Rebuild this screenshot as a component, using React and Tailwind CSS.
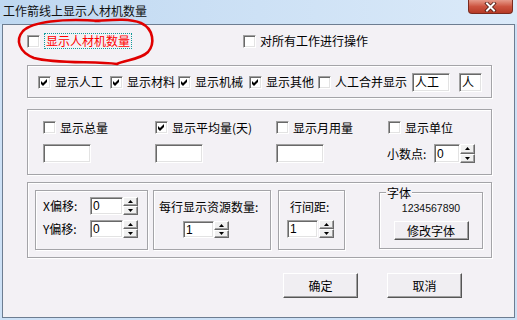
import React from "react";

const Check = ({ checked }) => (
  <span className="relative block w-[13px] h-[13px] shrink-0 bg-white border border-t-[#a0a0a0] border-l-[#a0a0a0] border-b-white border-r-white shadow-[inset_1px_1px_0_#696969,inset_-1px_-1px_0_#e3e3e3]">
    {checked && (
      <svg className="absolute left-0 top-0" width="11" height="11" viewBox="0 0 11 11">
        <path d="M2 4 L4 6 L8 2 L8 5 L4 9 L2 7 Z" fill="#000" />
      </svg>
    )}
  </span>
);

const CB = ({ checked, children, className = "" }) => (
  <div className={"flex items-center gap-[4px] " + className}>
    <Check checked={checked} />
    <span className="text-[12px] leading-[14px] whitespace-nowrap">{children}</span>
  </div>
);

const Field = ({ children, className = "" }) => (
  <div
    className={
      "shrink-0 bg-white border border-t-[#a0a0a0] border-l-[#a0a0a0] border-b-white border-r-white shadow-[inset_1px_1px_0_#696969,inset_-1px_-1px_0_#e3e3e3] flex items-center pl-[2px] text-[12px] leading-[14px] overflow-hidden " +
      className
    }
  >
    {children}
  </div>
);

const SpinHalf = ({ up }) => (
  <div className="flex-1 flex items-center justify-center bg-[#f0f0f0] border border-t-white border-l-white border-b-[#696969] border-r-[#696969] shadow-[inset_-1px_-1px_0_#a0a0a0]">
    <svg width="5" height="3" viewBox="0 0 5 3">
      <polygon points={up ? "2.5,0 5,3 0,3" : "0,0 5,0 2.5,3"} fill="#000" />
    </svg>
  </div>
);

const Spin = ({ className = "" }) => (
  <div className={"shrink-0 flex flex-col w-[15px] " + className}>
    <SpinHalf up />
    <SpinHalf />
  </div>
);

const Btn = ({ children, className = "" }) => (
  <div
    className={
      "shrink-0 flex items-center justify-center bg-[#f0eef2] border border-t-white border-l-white border-b-[#555] border-r-[#555] shadow-[inset_-1px_-1px_0_#a0a0a0] text-[12px] leading-[14px] " +
      className
    }
  >
    {children}
  </div>
);

const group =
  "shrink-0 border border-[#a4a4a8] shadow-[inset_1px_1px_0_#ffffff,1px_1px_0_#ffffff]";

export default function App() {
  return (
    <div className="relative w-[517px] h-[320px] overflow-hidden bg-[#cde1f6] font-['Noto_Sans_CJK_SC',sans-serif] text-black flex flex-col">
      {/* title bar */}
      <div className="h-[24px] shrink-0 flex items-start bg-gradient-to-r from-[#bfd8f1] to-[#dbeaf9]">
        <span className="ml-[3px] mt-[4px] text-[12px] leading-[14px] text-[#111] whitespace-nowrap">
          工作箭线上显示人材机数量
        </span>
        <div className="ml-auto mr-[4px] w-[45px] h-[14px] rounded-b-[4px] border border-t-0 border-[#7a2a1e] bg-gradient-to-b from-[#e59a8a] via-[#cc5440] to-[#b63a26] flex items-center justify-center">
          <svg width="13" height="10" viewBox="0 0 13 10">
            <path d="M3 1.5 L10 8.5 M10 1.5 L3 8.5" stroke="#4a1810" strokeWidth="3.6" strokeLinecap="square" />
            <path d="M3 1.5 L10 8.5 M10 1.5 L3 8.5" stroke="#ffffff" strokeWidth="2" strokeLinecap="square" />
          </svg>
        </div>
      </div>

      {/* client area */}
      <div className="ml-[2px] w-[513px] h-[294px] shrink-0 border border-[#6d7d91] bg-[#f3f1f5] flex flex-col pl-[24px]">
        {/* row 1 */}
        <div className="mt-[8px] h-[16px] flex items-center">
          <div className="w-[216px] flex items-center gap-[4px]">
            <Check />
            <span className="px-[1px] border border-dotted border-[#119a9a] text-[12px] leading-[14px] text-[#ff0000] whitespace-nowrap">
              显示人材机数量
            </span>
          </div>
          <CB>对所有工作进行操作</CB>
        </div>

        {/* group 1 */}
        <div className={group + " mt-[16px] w-[465px] h-[33px] flex items-center pl-[10px] pt-[1px]"}>
          <CB checked>显示人工</CB>
          <CB checked className="ml-[7px]">显示材料</CB>
          <CB checked className="ml-[3px]">显示机械</CB>
          <CB checked className="ml-[6px]">显示其他</CB>
          <CB className="ml-[4px]">人工合并显示</CB>
          <Field className="ml-[5px] w-[38px] h-[19px]">人工</Field>
          <Field className="ml-[9px] w-[23px] h-[19px]">人</Field>
        </div>

        {/* group 2 */}
        <div className={group + " mt-[11px] w-[465px] h-[66px] grid grid-cols-[112px_121px_112px_auto] content-start gap-y-[9px] pl-[15px] pt-[10px]"}>
          <CB className="h-[15px]">显示总量</CB>
          <CB checked className="h-[15px]">显示平均量(天)</CB>
          <CB className="h-[15px]">显示月用量</CB>
          <CB className="h-[15px]">显示单位</CB>
          <Field className="w-[48px] h-[19px]" />
          <Field className="w-[48px] h-[19px]" />
          <Field className="w-[48px] h-[19px]" />
          <div className="flex items-center h-[19px] -ml-[1px]">
            <span className="w-[47px] text-[12px] leading-[14px] whitespace-nowrap">小数点:</span>
            <Field className="w-[26px] h-[19px] font-['Liberation_Sans',sans-serif] text-[11px]">0</Field>
            <Spin className="h-[19px]" />
          </div>
        </div>

        {/* group 3 */}
        <div className={group + " mt-[7px] w-[465px] h-[76px] flex items-start pl-[7px] pt-[7px]"}>
          <div className={group + " w-[113px] h-[60px] flex flex-col pl-[7px] pt-[6px] gap-[5px]"}>
            <div className="flex items-center h-[18px]">
              <span className="w-[47px] text-[12px] leading-[14px] whitespace-nowrap">X偏移:</span>
              <Field className="w-[33px] h-[18px] font-['Liberation_Sans',sans-serif] text-[11px]">0</Field>
              <Spin className="h-[18px]" />
            </div>
            <div className="flex items-center h-[18px]">
              <span className="w-[47px] text-[12px] leading-[14px] whitespace-nowrap">Y偏移:</span>
              <Field className="w-[33px] h-[18px] font-['Liberation_Sans',sans-serif] text-[11px]">0</Field>
              <Spin className="h-[18px]" />
            </div>
          </div>

          <div className={group + " ml-[5px] w-[118px] h-[60px] flex flex-col pt-[7px]"}>
            <div className="h-[18px] pl-[5px] flex items-center text-[12px] leading-[14px] whitespace-nowrap">
              每行显示资源数量:
            </div>
            <div className="mt-[5px] pl-[29px] flex items-center">
              <Field className="w-[31px] h-[17px] font-['Liberation_Sans',sans-serif] text-[11px]">1</Field>
              <Spin className="h-[17px]" />
            </div>
          </div>

          <div className={group + " ml-[7px] w-[67px] h-[60px] flex flex-col pt-[7px]"}>
            <div className="h-[18px] pl-[11px] flex items-center text-[12px] leading-[14px] whitespace-nowrap">
              行间距:
            </div>
            <div className="mt-[4px] pl-[8px] flex items-center gap-[1px]">
              <Field className="w-[31px] h-[18px] font-['Liberation_Sans',sans-serif] text-[11px]">1</Field>
              <Spin className="h-[18px]" />
            </div>
          </div>

          <div className={group + " relative ml-[34px] mt-[2px] w-[104px] h-[57px] flex flex-col items-center pt-[8px]"}>
            <span className="absolute left-[6px] -top-[7px] px-[1px] bg-[#f3f1f5] text-[12px] leading-[14px]">字体</span>
            <span className="h-[14px] leading-[14px] text-[10.5px] font-['Liberation_Sans',sans-serif] text-[#111]">
              1234567890
            </span>
            <Btn className="mt-[6px] w-[75px] h-[19px]">修改字体</Btn>
          </div>
        </div>

        {/* buttons */}
        <div className="mt-[15px] flex pl-[256px] gap-[29px]">
          <Btn className="w-[75px] h-[25px]">确定</Btn>
          <Btn className="w-[75px] h-[25px]">取消</Btn>
        </div>
      </div>

      {/* hand-drawn red ellipse annotation */}
      <svg className="absolute left-0 top-0 pointer-events-none" width="517" height="320" viewBox="0 0 517 320">
        <path
          d="M100 21 C 62 18, 32 22, 23 31 C 15 40, 19 52, 34 58 C 55 64, 95 61, 117 64 C 124 60, 140 60, 148 52 C 155 44, 154 29, 141 23 C 128 18, 112 20, 95 21"
          fill="none"
          stroke="#e00000"
          strokeWidth="2.6"
          strokeLinecap="round"
        />
      </svg>
    </div>
  );
}
